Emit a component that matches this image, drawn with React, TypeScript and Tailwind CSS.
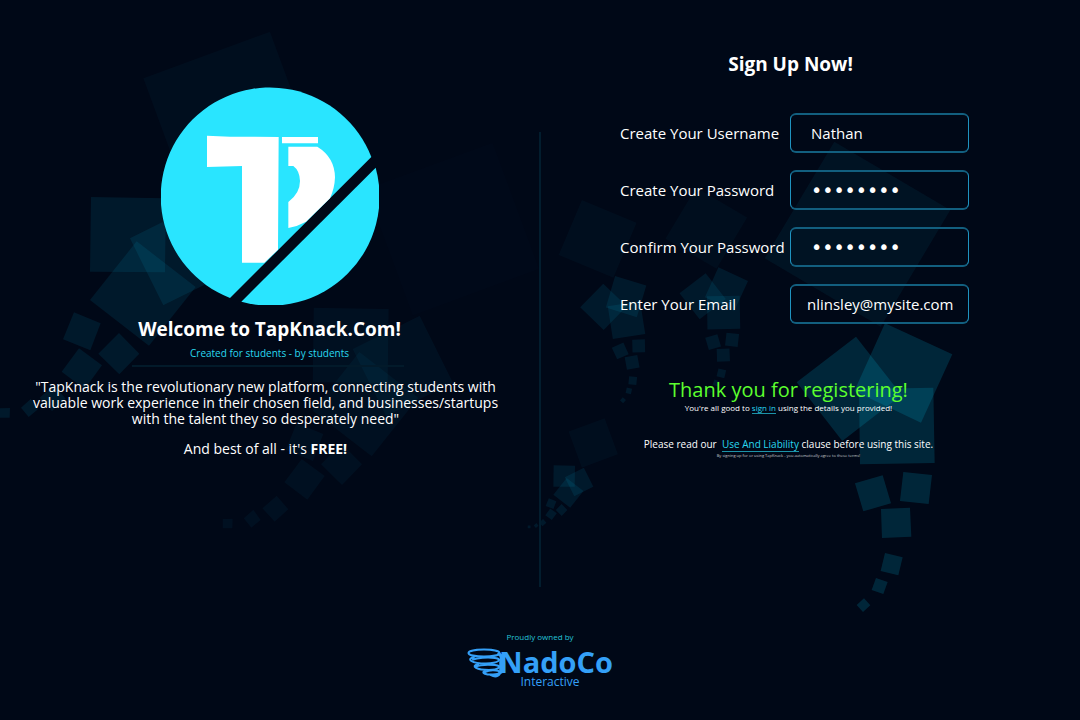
import type { ReactNode } from "react";

const leftTrail = [
  "273,51 498,55 495,277 270,275",
  "390,175 591,75 691,276 490,376",
  "410,184 587,321 447,497 270,360",
  "222,397 302,430 271,511 189,478",
  "357,459 418,521 358,583 295,521",
  "237,505 306,556 254,627 185,575",
  "162,615 197,656 156,693 119,653",
  "92,657 114,688 86,711 63,683",
  "0,685 30,684 29,713 0,713",
];

const rightTrail = [
  "315,40 517,133 423,338 223,243",
  "228,80 365,255 187,393 50,217",
  "237,237 460,233 464,459 240,463",
  "225,520 308,496 333,580 250,604",
  "370,486 456,495 446,582 360,573",
  "303,597 390,593 394,680 306,684",
  "315,729 368,742 355,796 302,783",
  "288,804 323,816 310,852 275,840",
  "252,865 271,886 249,906 230,885",
];

type TrailProps = {
  shapes: string[];
  shadow: string;
  transform: string;
  strength: number;
  shadowStrength: number;
};

function Trail({ shapes, shadow, transform, strength, shadowStrength }: TrailProps) {
  return (
    <g transform={transform}>
      <polygon points={shadow} fillOpacity={shadowStrength} />
      {shapes.map((points) => (
        <polygon key={points} points={points} fillOpacity={strength} />
      ))}
    </g>
  );
}

function Backdrop() {
  const leftShadow = "430,-305 810,-445 950,-65 570,75";
  const rightShadow = "163,-505 511,-300 302,50 -46,-155";
  return (
    <svg
      aria-hidden="true"
      viewBox="0 0 1080 720"
      preserveAspectRatio="xMidYMid slice"
      className="pointer-events-none absolute inset-0 h-full w-full"
      fill="#00d4ff"
    >
      <Trail shapes={leftTrail} shadow={leftShadow} transform="translate(0 180) scale(.3333)" strength={0.085} shadowStrength={0.03} />
      <Trail shapes={leftTrail} shadow={leftShadow} transform="translate(222.7 290.7) scale(.3333)" strength={0.045} shadowStrength={0.013} />
      <Trail shapes={leftTrail} shadow={leftShadow} transform="translate(527.7 460.5) scale(.095)" strength={0.085} shadowStrength={0.03} />
      <Trail shapes={rightTrail} shadow={rightShadow} transform="translate(780 310) scale(.3333)" strength={0.15} shadowStrength={0.055} />
      <Trail shapes={rightTrail} shadow={rightShadow} transform="translate(672.2 261.5) scale(.1467)" strength={0.085} shadowStrength={0.03} />
      <Trail shapes={rightTrail} shadow={rightShadow} transform="translate(568.5 276.7) rotate(-8) scale(.1467)" strength={0.085} shadowStrength={0.03} />
    </svg>
  );
}

function TapKnackLogo() {
  return (
    <svg role="img" aria-label="TapKnack" viewBox="33 51 654 654" className="size-[218px]">
      <path fill="#29e5ff" d="M664 261A327 327 0 1 0 240 684Z" />
      <path fill="#29e5ff" d="M677 293A327 327 0 0 1 274 695Z" />
      <path fill="#fff" d="M171 197L240 200L386 201L384 539L343 578H276V288L171 291Z" />
      <path fill="#fff" d="M396 201H504V220H396Z" />
      <path
        fill="#fff"
        d="M415 230H502Q554 262 555 322Q554 355 540 385L468 455Q445 468 415 474V396Q450 370 450 333Q449 302 430 288H415Z"
      />
    </svg>
  );
}

function Tornado() {
  return (
    <svg aria-hidden="true" viewBox="0 0 40 30" className="-mr-2 h-[30px] w-10" fill="none" stroke="#34a0f8" strokeWidth="2" strokeLinecap="round">
      <ellipse cx="17" cy="5" rx="15.500" ry="3.600" />
      <path d="M7 9C-1 11 4 15.500 19 15.500C32 15 36 11 28 10C20 9 10 10 6 11.500" />
      <path d="M11 16C3 18.500 10 22 22 22C32 21.500 36 18 28 17C20 16.500 12 17 9 18.500" />
      <path d="M18 23C13 25 20 27 26 26.500C34 26 35 23 29 22.500C24 22 20 23 18 24" />
      <path d="M24 27Q30 30 33 25" strokeWidth="2.500" />
      <path d="M32 6Q36 8 34 14L34 24" strokeWidth="3.500" />
    </svg>
  );
}

type FieldProps = {
  id: string;
  label: string;
  type: string;
  value: string;
  className: string;
};

function Field({ id, label, type, value, className }: FieldProps) {
  return (
    <div className="flex items-center">
      <label htmlFor={id} className="w-[170px] text-[15px] whitespace-nowrap">
        {label}
      </label>
      <input
        id={id}
        name={id}
        type={type}
        defaultValue={value}
        className={`h-10 w-[179px] rounded-md border border-y-2 border-x-[#1f93c0] border-y-[#125f7f] bg-transparent outline-none ${className}`}
      />
    </div>
  );
}

function AccentLink({ href, children }: { href: string; children: ReactNode }) {
  return (
    <a href={href} className="border-b border-[#1c93a8] text-[#29d8f0]">
      {children}
    </a>
  );
}

export default function App() {
  return (
    <div className="relative flex min-h-screen flex-col overflow-hidden bg-[#000817] font-['Open_Sans','Noto_Sans',sans-serif] text-white">
      <Backdrop />
      <main className="relative grid grow grid-cols-[1fr_2px_1fr]">
        <section className="flex flex-col items-center pt-[87px] text-center">
          <TapKnackLogo />
          <h1 className="mt-2 text-[19px] leading-8 font-bold">Welcome to TapKnack.Com!</h1>
          <p className="text-[10px] leading-4 text-[#29d8f0]">Created for students - by students</p>
          <hr className="mt-1 mr-1 w-[272px] border-t-2 border-[#021a2a]" />
          <div className="mt-3 pr-2 text-[14px] leading-4">
            <p>
              "TapKnack is the revolutionary new platform, connecting students with
              <br />
              valuable work experience in their chosen field, and businesses/startups
              <br />
              with the talent they so desperately need"
            </p>
            <p className="mt-[14px]">
              And best of all - it's <strong>FREE!</strong>
            </p>
          </div>
        </section>

        <div className="mt-[132px] mb-3 bg-[#021d2e]" />

        <section className="flex flex-col items-center pt-12 pr-10 text-center">
          <h2 className="text-[19px] leading-8 font-bold">Sign Up Now!</h2>
          <form className="mt-[33px] flex flex-col gap-[17px] pl-2 text-left">
            <Field id="username" label="Create Your Username" type="text" value="Nathan" className="px-5 text-[15px]" />
            <Field id="password" label="Create Your Password" type="password" value="tapknack" className="px-5 font-['DejaVu_Sans',sans-serif] text-[19px]" />
            <Field id="confirm" label="Confirm Your Password" type="password" value="tapknack" className="px-5 font-['DejaVu_Sans',sans-serif] text-[19px]" />
            <Field id="email" label="Enter Your Email" type="email" value="nlinsley@mysite.com" className="pr-2 pl-4 text-[15px]" />
          </form>
          <div className="pr-1">
            <p className="mt-[52px] text-[20px] leading-7 text-[#5cff2e]">Thank you for registering!</p>
            <p className="text-[8px] leading-2">
              You're all good to <AccentLink href="#sign-in">sign in</AccentLink> using the details you provided!
            </p>
            <p className="mt-6 text-[10px] leading-4">
              Please read our&nbsp; <AccentLink href="#liability">Use And Liability</AccentLink> clause before using this site.
            </p>
            <p className="text-[4px] leading-2 text-[#c8ccd2]">
              By signing up for or using TapKnack - you automatically agree to these terms!
            </p>
          </div>
        </section>
      </main>

      <footer className="relative flex flex-col items-center pt-8 pb-[30px] text-center">
        <p className="text-[8px] leading-3 text-[#25c3d8]">Proudly owned by</p>
        <div className="mt-[5px] flex items-start text-[#34a0f8]">
          <Tornado />
          <div>
            <p className="text-[29px] leading-7 font-bold">NadoCo</p>
            <p className="-mt-0.5 pr-3 text-[12px] leading-4">Interactive</p>
          </div>
        </div>
      </footer>
    </div>
  );
}
